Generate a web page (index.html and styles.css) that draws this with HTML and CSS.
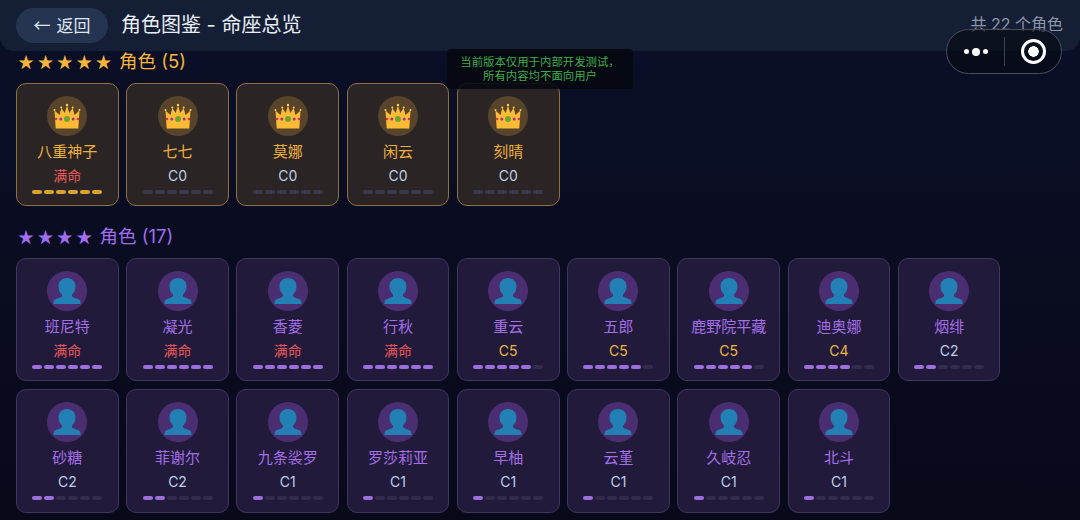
FILE: index.html
```html
<!DOCTYPE html>
<html lang="zh-CN">
<head>
<meta charset="utf-8">
<title>角色图鉴 - 命座总览</title>
<link rel="stylesheet" href="styles.css">
</head>
<body>
<svg class="defs" width="0" height="0" aria-hidden="true">
  <symbol id="crown" viewBox="0 0 28 28">
    <path fill="#fdbb35" d="M1.500 8.500 6.500 13 8.300 6l3.400 5L14 3.500 16.300 11l3.400-5 1.800 7 5-4.500-1.200 18H2.700z"/>
    <circle cx="1.500" cy="8" r="1" fill="#fdd24a"/><circle cx="8.300" cy="5.500" r="1" fill="#fdd24a"/><circle cx="14" cy="3" r="1.200" fill="#fdd24a"/><circle cx="19.700" cy="5.500" r="1" fill="#fdd24a"/><circle cx="26.500" cy="8" r="1" fill="#fdd24a"/>
    <circle cx="14" cy="17" r="3" fill="#6ea52f"/>
    <circle cx="7.800" cy="17" r="1.500" fill="#a5309a"/><circle cx="20.200" cy="17" r="1.500" fill="#a5309a"/>
    <circle cx="3" cy="17" r="1.300" fill="#d8344a"/><circle cx="25" cy="17" r="1.300" fill="#d8344a"/>
  </symbol>
  <symbol id="person" viewBox="0 0 28 28">
    <path fill="#2280b4" d="M14 1c5 0 8.500 3.500 8.500 8.500 0 3.500-1.500 6.500-3.500 8v1.500c0 1 3.500 2 6 3 1.800.8 2.500 2 2.500 4v1H.5v-1c0-2 .7-3.200 2.500-4 2.500-1 6-2 6-3v-1.500c-2-1.500-3.500-4.500-3.500-8C5.500 4.500 9 1 14 1z"/>
  </symbol>
</svg>

<header class="topbar">
  <button class="back"><span class="arrow">←</span><span>返回</span></button>
  <h1 class="page-title">角色图鉴 - 命座总览</h1>
  <span class="total">共 22 个角色</span>
</header>

<div class="notice">当前版本仅用于内部开发测试，<br>所有内容均不面向用户</div>

<div class="capsule">
  <div class="cap-dots"><i></i><i class="big"></i><i></i></div>
  <div class="cap-sep"></div>
  <div class="cap-target"><i></i></div>
</div>

<main class="content">
  <section class="group gold">
    <h2 class="group-title"><span class="stars">★★★★★</span>角色 (5)</h2>
    <div class="grid">
      <article class="card"><div class="avatar"><svg><use href="#crown"/></svg></div><div class="name">八重神子</div><div class="level max">满命</div><div class="pips"><i class="on"></i><i class="on"></i><i class="on"></i><i class="on"></i><i class="on"></i><i class="on"></i></div></article>
      <article class="card"><div class="avatar"><svg><use href="#crown"/></svg></div><div class="name">七七</div><div class="level">C0</div><div class="pips"><i></i><i></i><i></i><i></i><i></i><i></i></div></article>
      <article class="card"><div class="avatar"><svg><use href="#crown"/></svg></div><div class="name">莫娜</div><div class="level">C0</div><div class="pips"><i></i><i></i><i></i><i></i><i></i><i></i></div></article>
      <article class="card"><div class="avatar"><svg><use href="#crown"/></svg></div><div class="name">闲云</div><div class="level">C0</div><div class="pips"><i></i><i></i><i></i><i></i><i></i><i></i></div></article>
      <article class="card"><div class="avatar"><svg><use href="#crown"/></svg></div><div class="name">刻晴</div><div class="level">C0</div><div class="pips"><i></i><i></i><i></i><i></i><i></i><i></i></div></article>
    </div>
  </section>

  <section class="group purple">
    <h2 class="group-title"><span class="stars">★★★★</span>角色 (17)</h2>
    <div class="grid">
      <article class="card"><div class="avatar"><svg><use href="#person"/></svg></div><div class="name">班尼特</div><div class="level max">满命</div><div class="pips"><i class="on"></i><i class="on"></i><i class="on"></i><i class="on"></i><i class="on"></i><i class="on"></i></div></article>
      <article class="card"><div class="avatar"><svg><use href="#person"/></svg></div><div class="name">凝光</div><div class="level max">满命</div><div class="pips"><i class="on"></i><i class="on"></i><i class="on"></i><i class="on"></i><i class="on"></i><i class="on"></i></div></article>
      <article class="card"><div class="avatar"><svg><use href="#person"/></svg></div><div class="name">香菱</div><div class="level max">满命</div><div class="pips"><i class="on"></i><i class="on"></i><i class="on"></i><i class="on"></i><i class="on"></i><i class="on"></i></div></article>
      <article class="card"><div class="avatar"><svg><use href="#person"/></svg></div><div class="name">行秋</div><div class="level max">满命</div><div class="pips"><i class="on"></i><i class="on"></i><i class="on"></i><i class="on"></i><i class="on"></i><i class="on"></i></div></article>
      <article class="card"><div class="avatar"><svg><use href="#person"/></svg></div><div class="name">重云</div><div class="level high">C5</div><div class="pips"><i class="on"></i><i class="on"></i><i class="on"></i><i class="on"></i><i class="on"></i><i></i></div></article>
      <article class="card"><div class="avatar"><svg><use href="#person"/></svg></div><div class="name">五郎</div><div class="level high">C5</div><div class="pips"><i class="on"></i><i class="on"></i><i class="on"></i><i class="on"></i><i class="on"></i><i></i></div></article>
      <article class="card"><div class="avatar"><svg><use href="#person"/></svg></div><div class="name">鹿野院平藏</div><div class="level high">C5</div><div class="pips"><i class="on"></i><i class="on"></i><i class="on"></i><i class="on"></i><i class="on"></i><i></i></div></article>
      <article class="card"><div class="avatar"><svg><use href="#person"/></svg></div><div class="name">迪奥娜</div><div class="level high">C4</div><div class="pips"><i class="on"></i><i class="on"></i><i class="on"></i><i class="on"></i><i></i><i></i></div></article>
      <article class="card"><div class="avatar"><svg><use href="#person"/></svg></div><div class="name">烟绯</div><div class="level">C2</div><div class="pips"><i class="on"></i><i class="on"></i><i></i><i></i><i></i><i></i></div></article>
      <article class="card"><div class="avatar"><svg><use href="#person"/></svg></div><div class="name">砂糖</div><div class="level">C2</div><div class="pips"><i class="on"></i><i class="on"></i><i></i><i></i><i></i><i></i></div></article>
      <article class="card"><div class="avatar"><svg><use href="#person"/></svg></div><div class="name">菲谢尔</div><div class="level">C2</div><div class="pips"><i class="on"></i><i class="on"></i><i></i><i></i><i></i><i></i></div></article>
      <article class="card"><div class="avatar"><svg><use href="#person"/></svg></div><div class="name">九条裟罗</div><div class="level">C1</div><div class="pips"><i class="on"></i><i></i><i></i><i></i><i></i><i></i></div></article>
      <article class="card"><div class="avatar"><svg><use href="#person"/></svg></div><div class="name">罗莎莉亚</div><div class="level">C1</div><div class="pips"><i class="on"></i><i></i><i></i><i></i><i></i><i></i></div></article>
      <article class="card"><div class="avatar"><svg><use href="#person"/></svg></div><div class="name">早柚</div><div class="level">C1</div><div class="pips"><i class="on"></i><i></i><i></i><i></i><i></i><i></i></div></article>
      <article class="card"><div class="avatar"><svg><use href="#person"/></svg></div><div class="name">云堇</div><div class="level">C1</div><div class="pips"><i class="on"></i><i></i><i></i><i></i><i></i><i></i></div></article>
      <article class="card"><div class="avatar"><svg><use href="#person"/></svg></div><div class="name">久岐忍</div><div class="level">C1</div><div class="pips"><i class="on"></i><i></i><i></i><i></i><i></i><i></i></div></article>
      <article class="card"><div class="avatar"><svg><use href="#person"/></svg></div><div class="name">北斗</div><div class="level">C1</div><div class="pips"><i class="on"></i><i></i><i></i><i></i><i></i><i></i></div></article>
    </div>
  </section>
</main>
</body>
</html>
```

FILE: styles.css
```css
* { box-sizing: border-box; }

html, body {
  margin: 0;
  height: 100%;
}

body {
  position: relative;
  overflow: hidden;
  background: linear-gradient(180deg, #0a1029 0%, #0a0c20 50%, #080a1a 100%);
  color: #e6ecf5;
  font-family: Inter, "Noto Sans CJK SC", sans-serif;
}

.defs { position: absolute; }

.topbar {
  height: 51px;
  display: flex;
  align-items: center;
  padding: 0 17px 0 16px;
  background: #141f35;
  border-radius: 0 0 14px 14px;
}

.back {
  width: 92px;
  height: 35px;
  display: flex;
  align-items: center;
  justify-content: center;
  gap: 6px;
  padding: 0 0 2px;
  border: 0;
  border-radius: 18px;
  background: #253450;
  color: #dfe6f0;
  font: 17px/1 "Noto Sans CJK SC", sans-serif;
}

.page-title {
  margin: -1px 0 0 13px;
  font-size: 20px;
  font-weight: 400;
  line-height: 1;
  color: #e9edf5;
}

.total {
  margin: -3px 0 0 auto;
  font-size: 16px;
  line-height: 20px;
  color: #8f97aa;
}

.notice {
  position: absolute;
  left: 447px;
  top: 49px;
  width: 186px;
  height: 40px;
  padding-top: 6px;
  border-radius: 4px;
  background: rgba(6, 8, 16, 0.88);
  color: #3fae49;
  font-size: 11.400px;
  line-height: 14px;
  text-align: center;
}

.capsule {
  position: absolute;
  left: 946px;
  top: 29px;
  width: 116px;
  height: 45px;
  display: flex;
  align-items: center;
  border: 1px solid #4a4d5a;
  border-radius: 23px;
  background: rgba(8, 10, 20, 0.62);
}

.cap-dots {
  width: 57px;
  display: flex;
  align-items: center;
  justify-content: center;
  gap: 3px;
}

.cap-dots i {
  width: 5px;
  height: 5px;
  border-radius: 50%;
  background: #fff;
}

.cap-dots .big {
  width: 8px;
  height: 8px;
}

.cap-sep {
  width: 1px;
  height: 29px;
  background: #3c4150;
}

.cap-target {
  flex: 1;
  display: flex;
  justify-content: center;
}

.cap-target i {
  width: 25px;
  height: 25px;
  border: 3px solid #fff;
  border-radius: 50%;
  background: radial-gradient(circle, #fff 0 5px, transparent 5.500px);
}

.content {
  padding: 0 16px;
}

.group-title {
  display: flex;
  align-items: center;
  margin: 0;
  height: 20px;
  font-size: 18.500px;
  font-weight: 400;
  line-height: 20px;
}

.stars {
  font-family: "Noto Sans CJK SC", sans-serif;
  font-size: 16px;
  letter-spacing: 3.400px;
  margin: 0 4px 0 2px;
}

.gold .group-title { color: #f5b53c; }
.purple .group-title { color: #a06cf0; }

.group + .group { margin-top: 19.600px; }

.grid {
  display: flex;
  flex-wrap: wrap;
  gap: 8px 7.650px;
  margin-top: 12px;
}

.card {
  width: 102.600px;
  height: 123.400px;
  display: flex;
  flex-direction: column;
  align-items: center;
  padding-top: 12px;
  border: 1px solid;
  border-radius: 10px;
}

.gold .card {
  background: #2a2424;
  border-color: #8f7243;
}

.purple .card {
  background: #211a3b;
  border-color: #3f3563;
}

.avatar {
  width: 40px;
  height: 40px;
  display: flex;
  align-items: center;
  justify-content: center;
  border-radius: 50%;
}

.gold .avatar { background: #57442a; }
.purple .avatar { background: #4b2e72; }

.avatar svg {
  width: 28px;
  height: 28px;
}

.name {
  margin-top: 6px;
  font-size: 15px;
  line-height: 20px;
  white-space: nowrap;
}

.gold .name { color: #eeb13f; }
.purple .name { color: #a46fe6; }

.level {
  margin-top: 5px;
  font-size: 14px;
  line-height: 18px;
  color: #bcd0ea;
}

.level.max { color: #e8585a; }
.level.high { color: #eeb63f; }

.pips {
  display: flex;
  gap: 2px;
  margin-top: 5px;
}

.pips i {
  width: 10px;
  height: 4px;
  border-radius: 2px;
  background: #3a3a4e;
}

.purple .pips i { background: #332c4d; }
.gold .pips i.on { background: #d9a331; }
.purple .pips i.on { background: #9d6fdc; }
```
